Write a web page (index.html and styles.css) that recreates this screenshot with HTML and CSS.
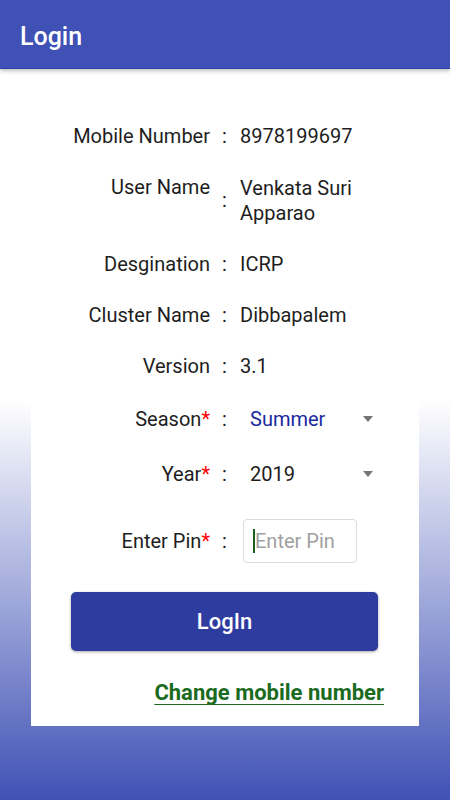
FILE: index.html
```html
<!DOCTYPE html>
<html>
<head>
<meta charset="utf-8">
<link rel="stylesheet" href="styles.css">
</head>
<body>
<header class="appbar"><span class="title">Login</span></header>
<main class="card">
  <div class="row r-std"><div class="label">Mobile Number</div><div class="colon">:</div><div class="value">8978199697</div></div>
  <div class="row r-two"><div class="label top">User Name</div><div class="colon">:</div><div class="value">Venkata Suri<br>Apparao</div></div>
  <div class="row r-std"><div class="label">Desgination</div><div class="colon">:</div><div class="value">ICRP</div></div>
  <div class="row r-std"><div class="label">Cluster Name</div><div class="colon">:</div><div class="value">Dibbapalem</div></div>
  <div class="row r-std"><div class="label">Version</div><div class="colon">:</div><div class="value">3.1</div></div>
  <div class="row r-season"><div class="label">Season<span class="req">*</span></div><div class="colon">:</div>
    <div class="value"><div class="spinner"><span class="sp-text blue">Summer</span><span class="arrow"></span></div></div></div>
  <div class="row r-year"><div class="label">Year<span class="req">*</span></div><div class="colon">:</div>
    <div class="value"><div class="spinner"><span class="sp-text">2019</span><span class="arrow"></span></div></div></div>
  <div class="row r-pin"><div class="label">Enter Pin<span class="req">*</span></div><div class="colon">:</div>
    <div class="value"><div class="pinbox"><span class="cursor"></span><span class="placeholder">Enter Pin</span></div></div></div>
  <div class="btn">LogIn</div>
  <div class="linkrow"><a class="link">Change mobile number</a></div>
</main>
</body>
</html>
```
FILE: styles.css
```css
html, body { margin: 0; padding: 0; }
body {
  width: 450px;
  height: 800px;
  overflow: hidden;
  font-family: Roboto, "Noto Sans", sans-serif;
  background: linear-gradient(to bottom, #ffffff 0, #ffffff 400px, #3f51b5 800px);
}
.appbar {
  position: relative;
  z-index: 2;
  height: 69px;
  box-sizing: border-box;
  background: #3f51b5;
  border-bottom: 1px solid #2b3fae;
  box-shadow: 0 2px 4px rgba(0,0,0,0.25);
  display: flex;
  align-items: center;
  padding-left: 20px;
  padding-top: 5px;
}
.title { color: #fff; font-size: 25px; font-weight: 500; }
.card {
  margin-left: 31px;
  width: 388px;
  height: 615px;
  padding-top: 42px;
  background: #fff;
  display: flex;
  flex-direction: column;
}
.row {
  display: grid;
  grid-template-columns: 179px 29px 1fr;
  align-items: center;
  font-size: 20px;
  line-height: 25px;
  color: #1e1e1e;
}
.r-std { height: 51px; }
.r-two { height: 77px; }
.r-season { height: 54px; }
.r-year { height: 56px; }
.r-pin { height: 78px; }
.label { text-align: right; }
.label.top { align-self: start; margin-top: 13px; }
.colon { text-align: center; }
.value { padding-left: 1px; }
.req { color: #ff0000; }
.spinner {
  display: flex;
  align-items: center;
  justify-content: space-between;
  width: 123px;
  padding-left: 10px;
}
.blue { color: #1a2aa0; }
.arrow {
  width: 0; height: 0;
  border-left: 5.5px solid transparent;
  border-right: 5.5px solid transparent;
  border-top: 6px solid #757575;
}
.pinbox {
  margin-left: 3px;
  height: 42px;
  width: 103px;
  border: 1px solid #dcdcdc;
  border-radius: 4px;
  display: flex;
  align-items: center;
  padding-left: 9px;
}
.cursor { width: 2px; height: 24px; background: #1b5e20; }
.placeholder { color: #a0a0a0; font-size: 20px; white-space: nowrap; }
.btn {
  margin-top: 12px;
  margin-left: 40px;
  width: 307px;
  height: 59px;
  background: #2f3c9f;
  border-radius: 5px;
  box-shadow: 0 1px 3px rgba(0,0,0,0.35);
  color: #fff;
  font-size: 22px;
  font-weight: 500;
  display: flex;
  align-items: center;
  justify-content: center;
}
.linkrow {
  margin-top: 30px;
  display: flex;
  justify-content: flex-end;
  padding-right: 35px;
}
.link {
  color: #1b6b1f;
  font-size: 22px;
  font-weight: 700;
  text-decoration: underline;
  text-decoration-thickness: 1px;
  text-underline-offset: 4px;
  line-height: 24px;
}
```
